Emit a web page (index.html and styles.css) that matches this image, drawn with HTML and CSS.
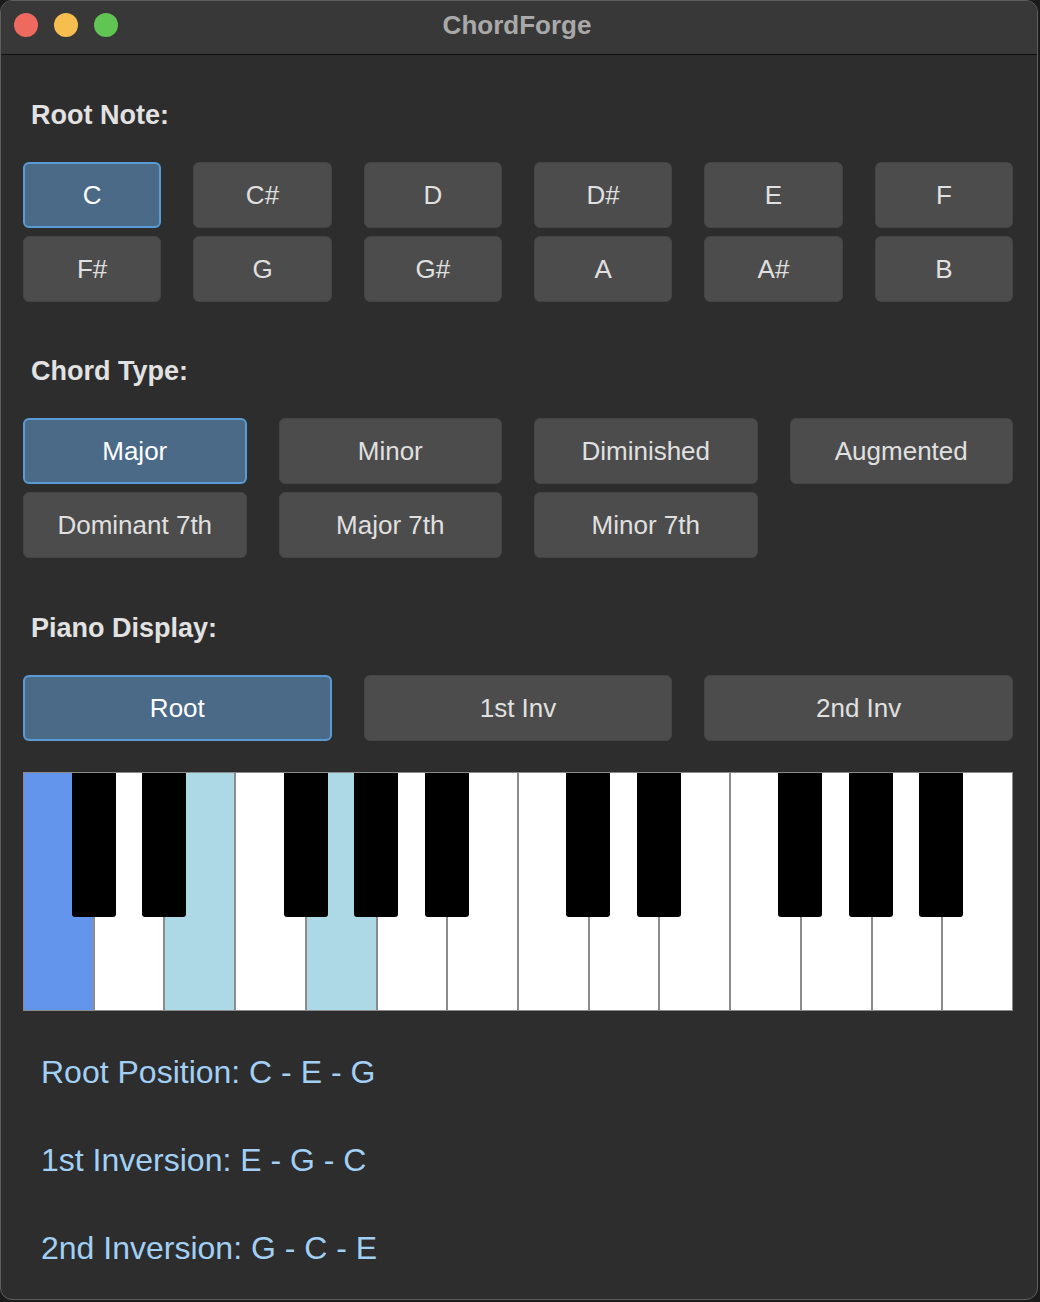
FILE: index.html
```html
<!DOCTYPE html>
<html>
<head>
<meta charset="utf-8">
<title>ChordForge</title>
<link rel="stylesheet" href="styles.css">
</head>
<body>
<div class="window">
  <div class="titlebar">
    <div class="lights">
      <span class="light red"></span>
      <span class="light yellow"></span>
      <span class="light green"></span>
    </div>
    <div class="title">ChordForge</div>
  </div>
  <div class="content">
    <section class="section first">
      <h2 class="label">Root Note:</h2>
      <div class="grid cols6">
        <div class="btn sel">C</div>
        <div class="btn">C#</div>
        <div class="btn">D</div>
        <div class="btn">D#</div>
        <div class="btn">E</div>
        <div class="btn">F</div>
        <div class="btn">F#</div>
        <div class="btn">G</div>
        <div class="btn">G#</div>
        <div class="btn">A</div>
        <div class="btn">A#</div>
        <div class="btn">B</div>
      </div>
    </section>
    <section class="section">
      <h2 class="label">Chord Type:</h2>
      <div class="grid cols4">
        <div class="btn sel">Major</div>
        <div class="btn">Minor</div>
        <div class="btn">Diminished</div>
        <div class="btn">Augmented</div>
        <div class="btn">Dominant 7th</div>
        <div class="btn">Major 7th</div>
        <div class="btn">Minor 7th</div>
      </div>
    </section>
    <section class="section">
      <h2 class="label">Piano Display:</h2>
      <div class="grid cols3">
        <div class="btn sel">Root</div>
        <div class="btn">1st Inv</div>
        <div class="btn">2nd Inv</div>
      </div>
      <div class="piano">
        <div class="white root"></div>
        <div class="white"></div>
        <div class="white chord"></div>
        <div class="white"></div>
        <div class="white chord"></div>
        <div class="white"></div>
        <div class="white"></div>
        <div class="white"></div>
        <div class="white"></div>
        <div class="white"></div>
        <div class="white"></div>
        <div class="white"></div>
        <div class="white"></div>
        <div class="white last"></div>
        <div class="black" style="left: calc(1 * 100% / 14 - 23px)"></div>
        <div class="black" style="left: calc(2 * 100% / 14 - 23px)"></div>
        <div class="black" style="left: calc(4 * 100% / 14 - 23px)"></div>
        <div class="black" style="left: calc(5 * 100% / 14 - 23px)"></div>
        <div class="black" style="left: calc(6 * 100% / 14 - 23px)"></div>
        <div class="black" style="left: calc(8 * 100% / 14 - 23px)"></div>
        <div class="black" style="left: calc(9 * 100% / 14 - 23px)"></div>
        <div class="black" style="left: calc(11 * 100% / 14 - 23px)"></div>
        <div class="black" style="left: calc(12 * 100% / 14 - 23px)"></div>
        <div class="black" style="left: calc(13 * 100% / 14 - 23px)"></div>
      </div>
    </section>
    <div class="results">
      <div class="result">Root Position: C - E - G</div>
      <div class="result">1st Inversion: E - G - C</div>
      <div class="result">2nd Inversion: G - C - E</div>
    </div>
  </div>
</div>
</body>
</html>
```

FILE: styles.css
```css
html, body {
  margin: 0;
  padding: 0;
  background: #1b1b1b;
}
body {
  width: 1040px;
  height: 1302px;
  overflow: hidden;
  font-family: "Liberation Sans", Arial, Helvetica, sans-serif;
}
.window {
  width: 1038px;
  height: 1300px;
  box-sizing: border-box;
  border: 1px solid #5e5e5e;
  border-radius: 12px;
  background: #2d2d2d;
  overflow: hidden;
  display: flex;
  flex-direction: column;
}
.titlebar {
  height: 53px;
  flex: none;
  background: #383838;
  border-bottom: 1px solid #0f0f0f;
  position: relative;
  display: flex;
  align-items: center;
  justify-content: center;
}
.lights {
  position: absolute;
  left: 13px;
  top: 12px;
  display: flex;
  gap: 16px;
}
.light {
  width: 24px;
  height: 24px;
  border-radius: 50%;
  display: block;
}
.red { background: #ee6a5f; }
.yellow { background: #f5be4f; }
.green { background: #61c554; }
.title {
  font-size: 26px;
  font-weight: bold;
  color: #a9a9a9;
  margin-left: -4px;
  margin-top: -4px;
}
.content {
  padding: 44px 24px 0 22px;
  display: flex;
  flex-direction: column;
}
.section {
  display: flex;
  flex-direction: column;
  gap: 31px;
  margin-bottom: 54px;
}
.section.first {
  margin-bottom: 53px;
}
.section:last-of-type {
  margin-bottom: 0;
}
.label {
  margin: 0;
  padding-left: 8px;
  font-size: 27px;
  line-height: 32px;
  font-weight: bold;
  color: #e2e2e2;
}
.grid {
  display: grid;
  column-gap: 32px;
  row-gap: 8px;
}
.cols6 { grid-template-columns: repeat(6, 1fr); }
.cols4 { grid-template-columns: repeat(4, 1fr); }
.cols3 { grid-template-columns: repeat(3, 1fr); }
.btn {
  height: 66px;
  box-sizing: border-box;
  border: 1px solid #444444;
  border-radius: 6px;
  background: #4c4c4c;
  color: #e0e0e0;
  font-size: 26px;
  display: flex;
  align-items: center;
  justify-content: center;
}
.btn.sel {
  background: #4a6a88;
  border: 2px solid #5b9bd5;
  color: #ffffff;
}
.piano {
  position: relative;
  height: 239px;
  display: flex;
  box-sizing: border-box;
  border: 1px solid #8a8a8a;
  border-right: none;
  background: #ffffff;
}
.white {
  flex: 1;
  background: #ffffff;
  border-right: 2px solid #8c8c8c;
}
.white.last {
  border-right: 1px solid #8a8a8a;
}
.white.root { background: #6495ed; }
.white.chord { background: #add8e6; }
.black {
  position: absolute;
  top: 0;
  width: 44px;
  height: 144px;
  background: #000000;
  border-radius: 0 0 3px 3px;
}
.results {
  padding: 41px 0 0 18px;
  display: flex;
  flex-direction: column;
  gap: 48px;
}
.result {
  font-size: 32px;
  line-height: 40px;
  color: #a2d0f5;
}
```
